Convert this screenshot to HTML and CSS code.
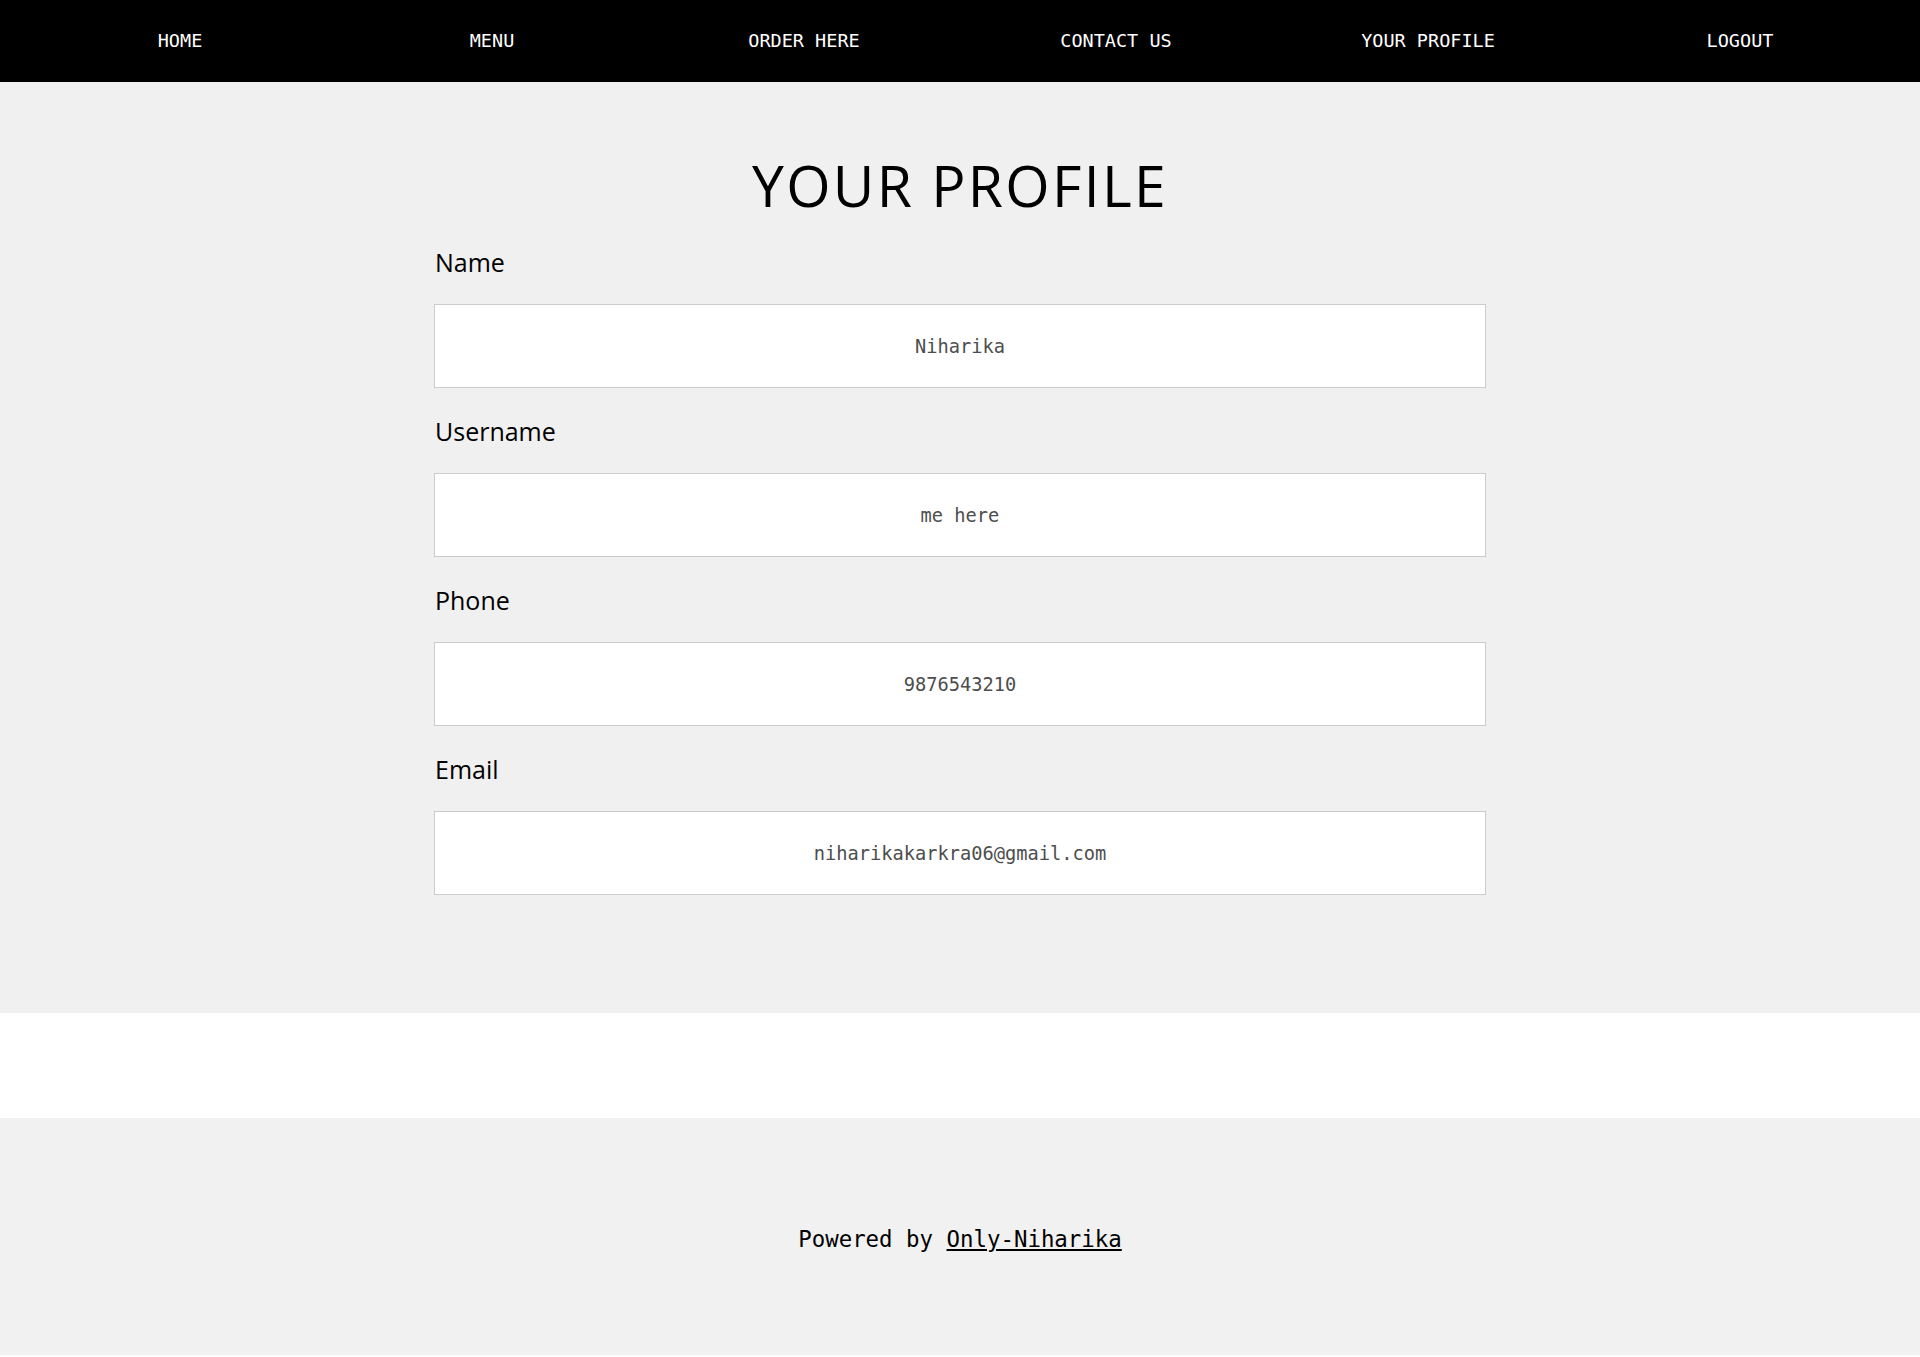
FILE: index.html
```html
<!DOCTYPE html>
<html lang="en">
<head>
<meta charset="utf-8">
<title>Your Profile</title>
<link rel="stylesheet" href="styles.css">
</head>
<body>
<nav class="nav">
  <a class="nav-link" href="#">HOME</a>
  <a class="nav-link" href="#">MENU</a>
  <a class="nav-link" href="#">ORDER HERE</a>
  <a class="nav-link" href="#">CONTACT US</a>
  <a class="nav-link" href="#">YOUR PROFILE</a>
  <a class="nav-link" href="#">LOGOUT</a>
</nav>
<main class="main">
  <h1 class="title">YOUR PROFILE</h1>
  <form class="form">
    <div class="field">
      <label class="label">Name</label>
      <input class="input" type="text" value="Niharika" readonly>
    </div>
    <div class="field">
      <label class="label">Username</label>
      <input class="input" type="text" value="me_here" readonly>
    </div>
    <div class="field">
      <label class="label">Phone</label>
      <input class="input" type="text" value="9876543210" readonly>
    </div>
    <div class="field">
      <label class="label">Email</label>
      <input class="input" type="text" value="niharikakarkra06@gmail.com" readonly>
    </div>
  </form>
</main>
<footer class="footer">
  <p class="footer-text">Powered by <a class="footer-link" href="#">Only-Niharika</a></p>
</footer>
</body>
</html>
```
FILE: styles.css
```css
html, body {
  margin: 0;
  padding: 0;
  background: #ffffff;
}

.nav {
  height: 82px;
  background: #000000;
  display: grid;
  grid-template-columns: repeat(6, 1fr);
  padding: 0 24px;
  align-items: center;
}

.nav-link {
  justify-self: center;
  color: #ffffff;
  text-decoration: none;
  font-family: "DejaVu Sans Mono", monospace;
  font-size: 18.5px;
  line-height: 22px;
}

.main {
  background: #f0f0f0;
  padding: 64px 0 118px;
}

.title {
  margin: 0 0 20px;
  text-align: center;
  font-family: "Open Sans", "Noto Sans", sans-serif;
  font-weight: 400;
  font-size: 57px;
  line-height: 78px;
  letter-spacing: 2.3px;
  color: #000000;
}

.form {
  width: 1052px;
  margin: 0 auto;
  display: flex;
  flex-direction: column;
  gap: 25px;
}

.field {
  display: flex;
  flex-direction: column;
}

.label {
  font-family: "Open Sans", "Noto Sans", sans-serif;
  font-size: 25px;
  line-height: 36px;
  color: #000000;
  margin-bottom: 24px;
  padding-left: 1px;
}

.input {
  box-sizing: border-box;
  width: 100%;
  height: 84px;
  margin: 0;
  padding: 0 4px;
  border: 1px solid #cccccc;
  background: #ffffff;
  text-align: center;
  font-family: "DejaVu Sans Mono", monospace;
  font-size: 18.7px;
  line-height: 44px;
  color: #4d4d4d;
  outline: none;
}

.footer {
  margin-top: 105px;
  height: 237px;
  box-sizing: border-box;
  padding-top: 4px;
  background: #f1f1f1;
  display: flex;
  align-items: center;
  justify-content: center;
}

.footer-text {
  margin: 0;
  font-family: "DejaVu Sans Mono", monospace;
  font-size: 22.4px;
  color: #000000;
}

.footer-link {
  color: #000000;
  text-decoration: underline;
}
```
